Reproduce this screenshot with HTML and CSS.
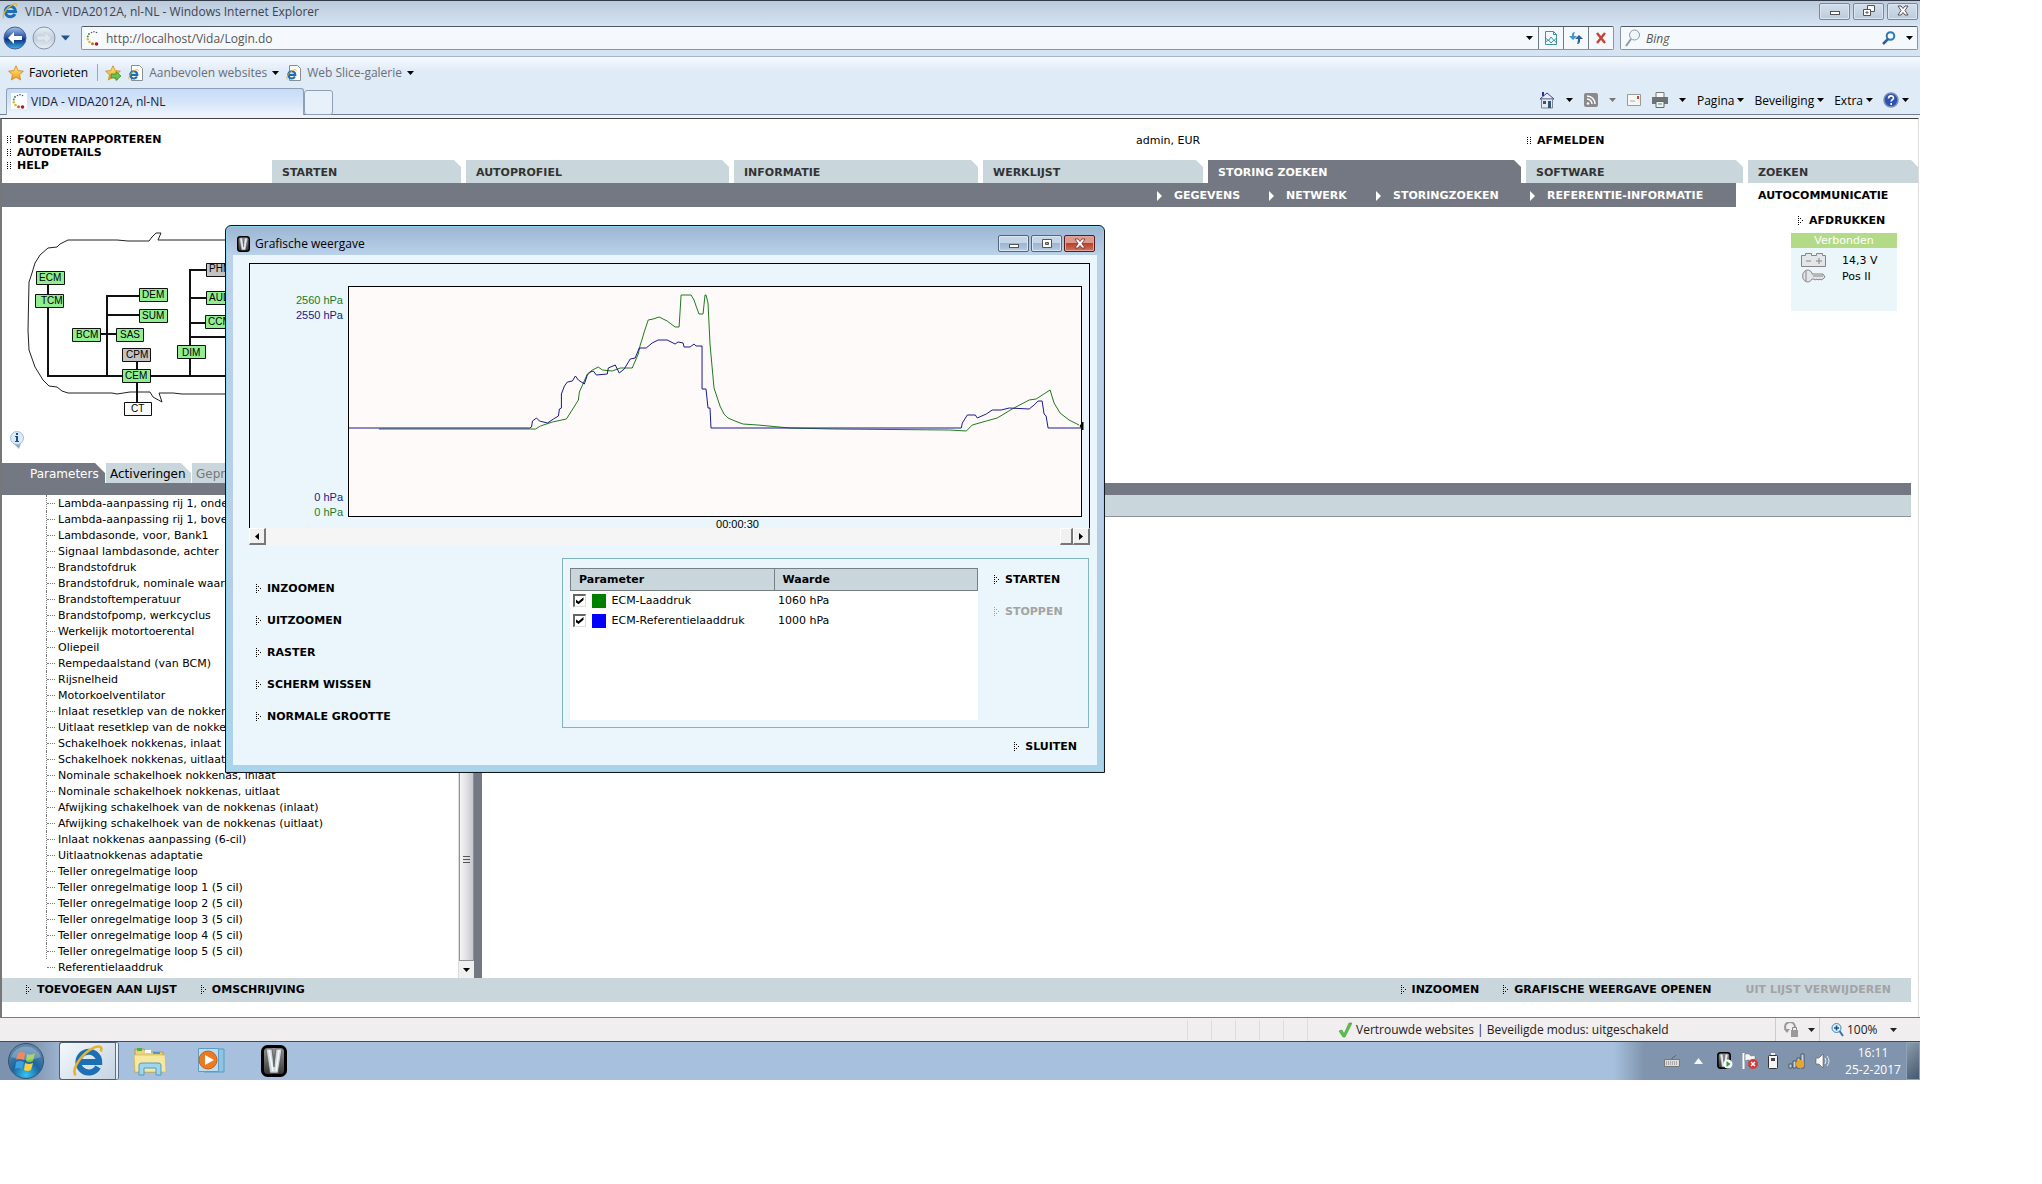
FILE: index.html
```
<!DOCTYPE html>
<html lang="nl">
<head>
  <meta charset="UTF-8" />
  <meta name="viewport" content="width=device-width, initial-scale=1.0" />
  <title>VIDA - VIDA2012A, nl-NL</title>
  <link rel="stylesheet" href="styles.css">
</head>
<body>
  <!-- Shared icons -->
  <svg class="defs" width="0" height="0">
    <defs>
      <linearGradient id="g-blue" x1="0" y1="0" x2="0" y2="1"><stop offset="0" stop-color="#a9c4ea"/><stop offset=".5" stop-color="#1d4ba0"/><stop offset=".55" stop-color="#0a2f7c"/><stop offset="1" stop-color="#3fb4f0"/></linearGradient>
      <linearGradient id="g-grey" x1="0" y1="0" x2="0" y2="1"><stop offset="0" stop-color="#e9eff6"/><stop offset=".5" stop-color="#c3d0de"/><stop offset="1" stop-color="#e8eef5"/></linearGradient>
      <linearGradient id="g-star" x1="0" y1="0" x2="0" y2="1"><stop offset="0" stop-color="#ffe98a"/><stop offset="1" stop-color="#f59c12"/></linearGradient>
      <radialGradient id="g-orb" cx=".5" cy=".9" r=".8"><stop offset="0" stop-color="#35c4f4"/><stop offset=".5" stop-color="#1b659f"/><stop offset="1" stop-color="#5f87ab"/></radialGradient>
      <linearGradient id="g-v" x1="0" y1="0" x2="0" y2="1"><stop offset="0" stop-color="#999"/><stop offset="1" stop-color="#333"/></linearGradient>
      <symbol id="caret" viewBox="0 0 7 4"><path d="M0 0h7L3.500 4z" fill="currentColor"/></symbol>
      <symbol id="dots" viewBox="0 0 4 8"><path d="M0 0h1v1H0zM3 0h1v1H3zM0 2h1v1H0zM3 2h1v1H3zM0 4h1v1H0zM3 4h1v1H3zM0 6h1v1H0zM3 6h1v1H3z" fill="currentColor"/></symbol>
      <symbol id="dotarrow" viewBox="0 0 6 9"><path d="M0 0h1v1H0zM0 2h1v1H0zM0 4h1v1H0zM0 6h1v1H0zM0 8h1v1H0zM2 2h1v1H2zM2 6h1v1H2zM4 4h1v1H4z" fill="currentColor"/></symbol>
      <symbol id="ie" viewBox="0 0 16 16">
        <path d="M13 11A5.200 5.200 0 1 1 13.600 8.500H4.500" fill="none" stroke="#1c6fb4" stroke-width="3"/>
        <path d="M1.800 15.200C-.5 12 5 4 11 1.300c3-1.300 4.300-.3 3.400 1.900" fill="none" stroke="#e8b32c" stroke-width="1.300"/>
      </symbol>
      <symbol id="vida" viewBox="0 0 16 16">
        <path d="M0 0h16v16H0z" fill="#fff"/>
        <g fill="#4a5a8a"><circle cx="6.500" cy="2.500" r=".8"/><circle cx="9" cy="1.800" r=".8"/><circle cx="11.500" cy="2.500" r=".8"/></g>
        <g fill="#3f8a50"><circle cx="4" cy="4" r="1"/><circle cx="2.800" cy="6.500" r="1"/></g>
        <g fill="#d9b636"><circle cx="2.800" cy="9.300" r="1.200"/><circle cx="4.500" cy="12" r="1.300"/></g>
        <circle cx="7.500" cy="13.700" r="1.500" fill="#cf6a2a"/><circle cx="11.500" cy="14" r="1.800" fill="#a8182a"/>
      </symbol>
      <symbol id="iepage" viewBox="0 0 16 16">
        <path d="M3.500.5h8l3 3v12h-11z" fill="#fff" stroke="#8a8f96"/>
        <use href="#ie" x="0" y="4" width="11" height="11"/>
      </symbol>
      <symbol id="star" viewBox="0 0 16 16"><path d="M8 .8l2.200 4.800 5.200.6-3.900 3.500 1.100 5.200L8 12.300l-4.600 2.600 1.100-5.200L.6 6.200l5.200-.6z" fill="url(#g-star)" stroke="#c98716" stroke-width=".8"/></symbol>
      <symbol id="volvo" viewBox="0 0 26 32">
        <rect x="1.500" y="1.500" width="23" height="29" rx="5" fill="url(#g-v)" stroke="#000" stroke-width="3"/>
        <path d="M5 4h6l2 18 2-18h6l-4 24H9z" fill="#cfd8dd" stroke="#555" stroke-width=".7"/>
        <path d="M8 5l4 21M18 5l-3 21" stroke="#f4f8fa" stroke-width="1.500"/>
      </symbol>
    </defs>
  </svg>

  <div class="desktop">
    <header class="titlebar">
      <svg class="icon16"><use href="#ie"/></svg>
      <span class="window-title">VIDA - VIDA2012A, nl-NL - Windows Internet Explorer</span>
      <div class="win-buttons">
        <button class="win-btn" aria-label="Minimaliseren"><svg width="12" height="12"><rect x="1.500" y="6.500" width="9" height="3" fill="#fff" stroke="#555"/></svg></button>
        <button class="win-btn" aria-label="Vorig formaat"><svg width="12" height="12" fill="#fff" stroke="#555"><path d="M4.500.5h7v6h-7z"/><path d="M.5 4.500h7v6h-7z"/><path d="M3 7h2v1H3z"/></svg></button>
        <button class="win-btn" aria-label="Sluiten"><svg width="12" height="12"><path d="M1 1h3l2 2.500L8 1h3L8 5.500 11 10H8L6 7.500 4 10H1l3-4.500z" fill="#fff" stroke="#555"/></svg></button>
      </div>
    </header>

    <div class="addressbar">
      <div class="history">
        <button class="round back" aria-label="Terug"><svg width="24" height="24"><circle cx="12" cy="12" r="11" fill="url(#g-blue)" stroke="#41619a"/><path d="M5 12l6-6v4h8v4h-8v4z" fill="#fff"/></svg></button>
        <button class="round" aria-label="Vooruit"><svg width="24" height="24"><circle cx="12" cy="12" r="11" fill="url(#g-grey)" stroke="#8593a5"/><path d="M19 12l-6-6v4H5v4h8v4z" fill="#dfe6ee" stroke="#c2ccd8" stroke-width=".6"/></svg></button>
        <svg class="caret caret-blue"><use href="#caret"/></svg>
      </div>
      <div class="urlbox">
        <svg class="icon16"><use href="#vida"/></svg>
        <input class="url" type="text" aria-label="Adres" value="http://localhost/Vida/Login.do">
        <svg class="caret"><use href="#caret"/></svg>
        <button class="cell" aria-label="Compatibiliteit"><svg width="14" height="16"><path d="M1.500 1.500h8l3 3v10h-11zM9.500 1.500v3h3M1.500 8l3 2.500L7 7l3 3.500 2.500-2.500M1.500 12l3-2 2.500 3 3-3 2.500 3" fill="none" stroke="#3f95a8"/></svg></button>
        <button class="cell" aria-label="Vernieuwen"><svg width="14" height="14"><path d="M6 1Q3 1 3 4v1H0l4 4 4-4H5q0-3 1-4z" fill="#3f95c8"/><path d="M8 13q3 0 3-3V8h3l-4-4-4 4h3q0 3-1 5z" fill="#2a5f9c"/></svg></button>
        <button class="cell" aria-label="Stoppen"><svg width="12" height="12"><path d="M2 1l8 10M10 1L2 11" stroke="#c84436" stroke-width="2.500"/></svg></button>
      </div>
      <div class="searchbox">
        <svg width="16" height="18"><circle cx="9.500" cy="6" r="5" fill="#eef6fb" stroke="#8d9aa8"/><path d="M6 10l-5 7" stroke="#8d9aa8" stroke-width="2"/></svg>
        <input class="search" type="text" aria-label="Zoeken" placeholder="Bing">
        <svg width="14" height="14"><circle cx="8.500" cy="5" r="3.800" fill="none" stroke="#2f78b8" stroke-width="2"/><path d="M6 8l-5 5" stroke="#2f5fa0" stroke-width="2.500"/></svg>
        <svg class="caret"><use href="#caret"/></svg>
      </div>
    </div>

    <div class="favbar">
      <button class="fav strong"><svg class="icon16"><use href="#star"/></svg>Favorieten</button>
      <button class="fav" aria-label="Toevoegen"><svg class="icon16"><use href="#star"/><path d="M6 9h5V6.500l5 4.500-5 4.500V13H6z" fill="#6cc24a" stroke="#2f8a28" stroke-width=".7"/></svg></button>
      <button class="fav"><svg class="icon16"><use href="#iepage"/></svg>Aanbevolen websites<svg class="caret"><use href="#caret"/></svg></button>
      <button class="fav"><svg class="icon16"><use href="#iepage"/></svg>Web Slice-galerie<svg class="caret"><use href="#caret"/></svg></button>
    </div>

    <div class="tabbar">
      <div class="browser-tab"><svg class="icon16"><use href="#vida"/></svg>VIDA - VIDA2012A, nl-NL</div>
      <button class="new-tab" aria-label="Nieuw tabblad"></button>
      <div class="commands">
        <button class="cmd" aria-label="Startpagina"><svg width="16" height="18"><path d="M1 8l7-6 7 6z" fill="#e6edf8" stroke="#34449c"/><path d="M2.500 8h11v9h-11z" fill="#e6ebf1" stroke="#7b8594"/><path d="M4 10h3v3H4zM9 10h3v7H9z" fill="#34547c"/><path d="M3 1h2v4H3z" fill="#3a2a9c"/></svg><svg class="caret"><use href="#caret"/></svg></button>
        <button class="cmd dim" aria-label="Feeds"><svg width="14" height="14"><rect width="14" height="14" rx="2" fill="#8a8a8a"/><circle cx="4" cy="10.500" r="1.300" fill="#fff"/><path d="M3 6a5 5 0 0 1 5 5M3 3a8 8 0 0 1 8 8" fill="none" stroke="#fff" stroke-width="1.400"/></svg><svg class="caret"><use href="#caret"/></svg></button>
        <button class="cmd" aria-label="E-mail"><svg width="14" height="12"><path d="M.5.5h13v11H.5z" fill="#f7f7f4" stroke="#9b9b98"/><path d="M10 2h2v3h-2z" fill="#c8433a"/><path d="M3 7h5" stroke="#aaa"/></svg></button>
        <button class="cmd" aria-label="Afdrukken"><svg width="16" height="16"><path d="M4 .5h8v5H4z" fill="#f5f7f9" stroke="#777"/><path d="M0 5h16v7H0z" fill="#6d7277"/><path d="M4 9.500h8v6H4z" fill="#eef2f5" stroke="#666"/><path d="M6 12h4" stroke="#4a9a5a"/></svg><svg class="caret"><use href="#caret"/></svg></button>
        <button class="cmd">Pagina<svg class="caret"><use href="#caret"/></svg></button>
        <button class="cmd">Beveiliging<svg class="caret"><use href="#caret"/></svg></button>
        <button class="cmd">Extra<svg class="caret"><use href="#caret"/></svg></button>
        <button class="cmd" aria-label="Help"><svg width="16" height="16"><circle cx="8" cy="8" r="7" fill="#2b52b0" stroke="#7d8fb4" stroke-width="1.500"/><path d="M5.500 6.500c0-3.500 5-3.300 5-.5 0 1.700-2.300 1.600-2.300 3.500M8.200 11v2" fill="none" stroke="#fff" stroke-width="1.600"/></svg><svg class="caret"><use href="#caret"/></svg></button>
      </div>
    </div>

    <main class="page">
      <div class="page-head">
        <ul class="quick">
          <li><svg class="dots"><use href="#dots"/></svg><a href="#">FOUTEN RAPPORTEREN</a></li>
          <li><svg class="dots"><use href="#dots"/></svg><a href="#">AUTODETAILS</a></li>
          <li><svg class="dots"><use href="#dots"/></svg><a href="#">HELP</a></li>
        </ul>
        <div class="head-right">
          <div class="user-row">
            <span>admin, EUR</span>
            <span><svg class="dots"><use href="#dots"/></svg><a href="#">AFMELDEN</a></span>
          </div>
          <nav class="main-tabs">
            <a href="#">STARTEN</a>
            <a href="#">AUTOPROFIEL</a>
            <a href="#">INFORMATIE</a>
            <a href="#">WERKLIJST</a>
            <a href="#" class="active">STORING ZOEKEN</a>
            <a href="#">SOFTWARE</a>
            <a href="#">ZOEKEN</a>
          </nav>
        </div>
      </div>
      <nav class="sub-nav">
        <div class="sub-items">
          <a href="#">GEGEVENS</a>
          <a href="#">NETWERK</a>
          <a href="#">STORINGZOEKEN</a>
          <a href="#">REFERENTIE-INFORMATIE</a>
        </div>
        <a href="#" class="current">AUTOCOMMUNICATIE</a>
      </nav>

      <div class="overview">
        <!-- Network of control units -->
        <svg class="network" viewBox="0 0 300 256" width="300" height="256">
          <path d="M300 33H156l3-7h-5l-4 4-3 4h-21l-11-1H66l-8 4-3 3-9 1-8 7-5 8-3 10-3 9-1 48 1 20 6 17 8 13 6 6 8 1 5 4 6 2h44l5 1 13-2h20l3 5 9 5-3-9 14 0 9 1h120" fill="none" stroke="#222"/>
          <g transform="translate(0 12)">
            <path d="M46 65v92h254M105 157V77h35M105 96h34M99 115h20M135 141v42M188 158V51h20M188 79h20M188 104h20M188 118h112" fill="none" stroke="#111" stroke-width="2"/>
            <g class="units">
              <g fill="#90ee90" stroke="#111">
                <path d="M34.500 52.500h28v13h-28zM33.500 75.500h28v13h-28zM137.500 69.500h28v13h-28zM137.500 90.500h28v13h-28zM70.500 109.500h28v13h-28zM114.500 109.500h27v13h-27zM120.500 150.500h28v13h-28zM175.500 126.500h28v13h-28zM204.500 72.500h28v13h-28zM203.500 96.500h28v13h-28z"/>
                <path d="M120.500 129.500h28v13h-28zM204.500 44.500h28v13h-28z" fill="#c3c3c3"/>
                <path d="M122.500 183.500h27v13h-27z" fill="#fff"/>
              </g>
              <text x="37" y="62">ECM</text><text x="39" y="85">TCM</text><text x="140" y="79">DEM</text><text x="140" y="100">SUM</text>
              <text x="74" y="119">BCM</text><text x="118" y="119">SAS</text><text x="124" y="139">CPM</text><text x="123" y="160">CEM</text>
              <text x="180" y="137">DIM</text><text x="207" y="53">PHM</text><text x="207" y="82">AUD</text><text x="206" y="106">CCM</text><text x="129" y="193">CT</text>
            </g>
          </g>
          <path d="M11 236h8l-2 6z" fill="#8fabc8"/>
          <circle cx="15" cy="231" r="6.500" fill="#dcebf8" stroke="#a6bdd4"/>
          <path d="M14 226h2v2h-2zM13 229h3v5h1v1h-4v-1h1v-4h-1z" fill="#1f4a94"/>
        </svg>
        <aside class="car-status">
          <a class="action" href="#"><svg class="arrow"><use href="#dotarrow"/></svg>AFDRUKKEN</a>
          <div class="link-state">Verbonden</div>
          <dl>
            <dt><svg width="26" height="16"><path d="M.5 3.500h4v-2h6v2h5v-2h6v2h3v11H.5z" fill="#e3e6e8" stroke="#858585"/><path d="M5 9h5M15 9h6M18 6v6" stroke="#858585"/></svg></dt><dd>14,3 V</dd>
            <dt><svg width="26" height="16"><path d="M11 5a5 6 0 1 0 0 6h2l1 1 2-1 1 1 2-1 1 1 2-1 2-2-2-3H11z" fill="#e3e6e8" stroke="#858585"/><path d="M5 3v10M12 8h10" stroke="#858585"/></svg></dt><dd>Pos II</dd>
          </dl>
        </aside>
      </div>

      <section class="workspace">
        <nav class="pane-tabs">
          <a href="#" class="active">Parameters</a>
          <a href="#">Activeringen</a>
          <a href="#" class="off">Geprogrammeerd</a>
        </nav>
        <div class="panes">
          <div class="tree-pane">
            <ul class="tree">
              <li>Lambda-aanpassing rij 1, onder</li>
              <li>Lambda-aanpassing rij 1, boven</li>
              <li>Lambdasonde, voor, Bank1</li>
              <li>Signaal lambdasonde, achter</li>
              <li>Brandstofdruk</li>
              <li>Brandstofdruk, nominale waarde</li>
              <li>Brandstoftemperatuur</li>
              <li>Brandstofpomp, werkcyclus</li>
              <li>Werkelijk motortoerental</li>
              <li>Oliepeil</li>
              <li>Rempedaalstand (van BCM)</li>
              <li>Rijsnelheid</li>
              <li>Motorkoelventilator</li>
              <li>Inlaat resetklep van de nokkenas</li>
              <li>Uitlaat resetklep van de nokkenas</li>
              <li>Schakelhoek nokkenas, inlaat</li>
              <li>Schakelhoek nokkenas, uitlaat</li>
              <li>Nominale schakelhoek nokkenas, inlaat</li>
              <li>Nominale schakelhoek nokkenas, uitlaat</li>
              <li>Afwijking schakelhoek van de nokkenas (inlaat)</li>
              <li>Afwijking schakelhoek van de nokkenas (uitlaat)</li>
              <li>Inlaat nokkenas aanpassing (6-cil)</li>
              <li>Uitlaatnokkenas adaptatie</li>
              <li>Teller onregelmatige loop</li>
              <li>Teller onregelmatige loop 1 (5 cil)</li>
              <li>Teller onregelmatige loop 2 (5 cil)</li>
              <li>Teller onregelmatige loop 3 (5 cil)</li>
              <li>Teller onregelmatige loop 4 (5 cil)</li>
              <li>Teller onregelmatige loop 5 (5 cil)</li>
              <li>Referentielaaddruk</li>
            </ul>
            <div class="vscroll">
              <div class="vthumb"><i></i></div>
              <svg class="caret"><use href="#caret"/></svg>
            </div>
          </div>
          <div class="value-pane"><div class="value-head"></div></div>
        </div>
        <footer class="actions">
          <a class="action" href="#"><svg class="arrow"><use href="#dotarrow"/></svg>TOEVOEGEN AAN LIJST</a>
          <a class="action" href="#"><svg class="arrow"><use href="#dotarrow"/></svg>OMSCHRIJVING</a>
          <span class="spacer"></span>
          <a class="action" href="#"><svg class="arrow"><use href="#dotarrow"/></svg>INZOOMEN</a>
          <a class="action" href="#"><svg class="arrow"><use href="#dotarrow"/></svg>GRAFISCHE WEERGAVE OPENEN</a>
          <a class="action off" href="#">UIT LIJST VERWIJDEREN</a>
        </footer>
      </section>
    </main>

    <div class="statusbar">
      <div class="slots"><i></i><i></i><i></i><i></i><i></i></div>
      <div class="zone"><svg width="14" height="16"><path d="M1 9l3-1 2 4 5-11h3L7 15H5z" fill="#5cc04a" stroke="#3f9a34" stroke-width=".6"/></svg>Vertrouwde websites | Beveiligde modus: uitgeschakeld</div>
      <div class="privacy"><svg width="16" height="16"><path d="M3 9a5 5 0 1 1 8-4" fill="none" stroke="#9a9a9a" stroke-width="2"/><path d="M7 8h7v7H7z" fill="#9a9a9a"/><path d="M8.500 8V5.500h4V8" fill="none" stroke="#888"/><path d="M0 7h6l-3 4z" fill="#9a9a9a"/></svg><svg class="caret"><use href="#caret"/></svg></div>
      <div class="zoom"><svg width="14" height="16"><circle cx="5.500" cy="6" r="4.500" fill="#dff0fa" stroke="#3f87b8"/><path d="M3 6h5M5.500 3.500v5" stroke="#1c4f90" stroke-width="1.600"/><path d="M8.500 9l3.500 5" stroke="#3a6fa8" stroke-width="2"/></svg>100%<svg class="caret"><use href="#caret"/></svg></div>
    </div>

    <div class="taskbar">
      <button class="start" aria-label="Start"><svg width="38" height="38"><circle cx="19" cy="19" r="17.500" fill="url(#g-orb)" stroke="#35536f"/><path d="M11 11q4-2 7 0l-1 7q-4-2-8 0z" fill="#e8622c"/><path d="M20 12q4 2 8-1l-2 8q-4 2-7 0z" fill="#8cc63e"/><path d="M9 20q4-2 8 0l-2 7q-4-2-7 0z" fill="#3fa0e0"/><path d="M18 21q4 2 8 0l-2 7q-4 2-7 0z" fill="#f9cf3c"/><path d="M4 15a16 16 0 0 1 30 0q-15 6-30 0z" fill="#fff" opacity=".25"/></svg></button>
      <button class="task open" aria-label="Internet Explorer"><svg width="32" height="32"><use href="#ie"/></svg></button>
      <button class="task" aria-label="Verkenner"><svg width="34" height="30"><path d="M2 3h9l2 3h17v20H2z" fill="#ecd27a" stroke="#b89a48"/><path d="M4 2h5v3H4z" fill="#4fae4a"/><path d="M12 4h6v3h-6z" fill="#fff"/><path d="M20 6h7v2h-7z" fill="#4f9ad0"/><path d="M1 9h31l1 17H2z" fill="#f7e8a0" stroke="#cdb565" stroke-width=".7"/><path d="M6 29V19q0-2 3-2h16q3 0 3 2v10h-5v-7H11v7z" fill="#9fd6ee" stroke="#4f9cc4"/></svg></button>
      <button class="task" aria-label="Mediaspeler"><svg width="30" height="28"><path d="M7 2h20v23H7z" fill="#8fc4e4" stroke="#5b9cc4"/><path d="M1.500 1.500h20v23h-20z" fill="#bcdcf0" stroke="#5b9cc4"/><circle cx="11" cy="13" r="9" fill="#ec7a22" stroke="#c4621a"/><path d="M8 8l9 5-9 5z" fill="#fff"/></svg></button>
      <button class="task" aria-label="VIDA"><svg width="26" height="32"><use href="#volvo"/></svg></button>
      <div class="tray">
        <svg width="16" height="14"><path d="M.5 5.500h15v7H.5z" fill="#ddd" stroke="#777"/><path d="M2 8h12M2 10h12" stroke="#777" stroke-dasharray="1 1"/><path d="M8 5c0-3 3-1 4-4" fill="none" stroke="#666"/></svg>
        <svg class="more" width="9" height="6"><path d="M0 6l4.500-6L9 6z" fill="#f2f5f8"/></svg>
        <svg width="16" height="18"><use href="#volvo" width="14" height="17"/><circle cx="11" cy="12" r="4.500" fill="#fff"/><path d="M9.500 9l4 3-4 3z" fill="#2f9a3a"/></svg>
        <svg width="16" height="18"><path d="M1.500 1v16" stroke="#fff" stroke-width="2"/><path d="M3 2q4-1 5 1t5 0v7q-4 1-5-1T3 9z" fill="#f4f4f4" stroke="#666" stroke-width=".5"/><circle cx="11" cy="12" r="5" fill="#d63a34"/><path d="M9 10l4 4m0-4l-4 4" stroke="#fff" stroke-width="1.500"/></svg>
        <svg width="12" height="18"><rect x="1.500" y="3.500" width="9" height="13" rx="1" fill="#f4f4f4" stroke="#333"/><path d="M4 1h4v2H4z" fill="#eee"/><path d="M4 6h4v3H4z" fill="#444"/></svg>
        <svg width="18" height="16"><path d="M1 11h3v4H1zM5 8h3v7H5zM9 5h3v10H9zM13 1h3v14h-3z" fill="#c8d2da" stroke="#3a4553" stroke-width=".8"/><circle cx="12" cy="11" r="4" fill="#eaa62a"/></svg>
        <svg width="16" height="16"><path d="M1 5h3l4-4v14l-4-4H1z" fill="#fff" stroke="#555" stroke-width=".6"/><path d="M10 5q2 3 0 6M12 3q4 5 0 10" fill="none" stroke="#e8edf2"/></svg>
        <div class="clock"><span>16:11</span><span>25-2-2017</span></div>
      </div>
      <button class="peek" aria-label="Bureaublad weergeven"></button>
    </div>

    <!-- Graph window -->
    <div class="dialog" role="dialog" aria-labelledby="dlg-title">
      <div class="dialog-title">
        <svg width="13" height="16"><use href="#volvo"/></svg>
        <span id="dlg-title">Grafische weergave</span>
        <div class="win-buttons">
          <button class="win-btn" aria-label="Minimaliseren"><svg width="12" height="12"><rect x="1.500" y="6.500" width="9" height="3" fill="#fff" stroke="#555"/></svg></button>
          <button class="win-btn" aria-label="Maximaliseren"><svg width="12" height="10"><path d="M1.500.5h9v8h-9z" fill="#fff" stroke="#555"/><path d="M4.500 3.500h3v2h-3z" fill="#9ab" stroke="#555"/></svg></button>
          <button class="win-btn close" aria-label="Sluiten"><svg width="12" height="11"><path d="M1 1h3l2 2.500L8 1h3L8 5.500 11 10H8L6 7.500 4 10H1l3-4.500z" fill="#fff" stroke="#6a3030" stroke-width=".8"/></svg></button>
        </div>
      </div>
      <div class="dialog-body">
        <div class="graph">
          <div class="axis">
            <div><span class="green">2560 hPa</span><span class="blue">2550 hPa</span></div>
            <div><span class="blue">0 hPa</span><span class="green">0 hPa</span></div>
          </div>
          <div class="plot">
            <svg viewBox="0 0 734 229" preserveAspectRatio="none" fill="none" stroke-width="1">
              <polyline stroke="#1e7a1e" points="30,142 187,142 192,139 204,135 218,132 225,121 230,113 231,105 235,96 239,87 244,83 250,80 254,83 264,84 272,81 284,81 287,74 290,67 292,58 294,52 296,45 298,39 300,33 305,32 311,30 319,34 327,40 331,40 333,8 343,8 346,13 348,19 351,27 355,27 357,8 358,8 360,16 362,57 364,79 366,101 368,107 372,119 376,127 380,131 387,134 395,137 410,138 442,141 485,142 602,143 619,144 625,138 639,134 650,131 665,122 682,113 689,112 703,103 707,116 713,126 722,133 732,138"/>
              <polyline stroke="#1a1a8c" points="0,141 181,141 183,140 184,134 188,131 191,134 199,136 205,132 210,129 211,122 213,121 213,107 216,99 219,95 224,94 227,89 230,93 236,97 239,88 242,85 245,84 248,88 259,87 260,81 267,78 271,86 276,82 282,72 287,71 291,61 298,61 304,56 310,53 319,53 327,57 330,55 335,56 336,60 342,60 346,57 348,59 354,59 354,102 358,102 360,121 362,121 363,141 614,141 615,136 620,128 628,128 630,131 639,127 645,123 654,123 662,121 682,122 687,118 691,114 695,114 697,127 699,129 701,141 734,141"/>
              <path d="M736 135l-3 4 3 4z" fill="#000" stroke="#000"/>
            </svg>
          </div>
          <div class="time">00:00:30</div>
        </div>
        <div class="hscroll">
          <button class="hbtn" aria-label="Links"><svg width="4" height="7"><path d="M4 0v7L0 3.500z"/></svg></button>
          <span class="hthumb"></span>
          <button class="hbtn" aria-label="Rechts"><svg width="4" height="7"><path d="M0 0v7l4-3.500z"/></svg></button>
        </div>
        <div class="controls">
          <div class="graph-actions">
            <button class="action"><svg class="arrow"><use href="#dotarrow"/></svg>INZOOMEN</button>
            <button class="action"><svg class="arrow"><use href="#dotarrow"/></svg>UITZOOMEN</button>
            <button class="action"><svg class="arrow"><use href="#dotarrow"/></svg>RASTER</button>
            <button class="action"><svg class="arrow"><use href="#dotarrow"/></svg>SCHERM WISSEN</button>
            <button class="action"><svg class="arrow"><use href="#dotarrow"/></svg>NORMALE GROOTTE</button>
          </div>
          <div class="legend">
            <div class="legend-list">
              <table>
                <thead><tr><th>Parameter</th><th>Waarde</th></tr></thead>
                <tbody>
                  <tr><td><label><input type="checkbox" checked><i class="swatch s-green"></i>ECM-Laaddruk</label></td><td>1060 hPa</td></tr>
                  <tr><td><label><input type="checkbox" checked><i class="swatch s-blue"></i>ECM-Referentielaaddruk</label></td><td>1000 hPa</td></tr>
                </tbody>
              </table>
            </div>
            <div class="legend-actions">
              <button class="action"><svg class="arrow"><use href="#dotarrow"/></svg>STARTEN</button>
              <button class="action off" disabled><svg class="arrow"><use href="#dotarrow"/></svg>STOPPEN</button>
            </div>
          </div>
        </div>
        <div class="dialog-foot">
          <button class="action"><svg class="arrow"><use href="#dotarrow"/></svg>SLUITEN</button>
        </div>
      </div>
    </div>
  </div>
</body>
</html>
```
FILE: styles.css
```
* { box-sizing: border-box; }
body { margin: 0; padding: 0 122px 104px 0; background: #fff; color: #000; font-family: "DejaVu Sans", Verdana, sans-serif; font-size: 11px; }
a { color: inherit; text-decoration: none; }
ul { list-style: none; margin: 0; padding: 0; }
button { background: none; border: 0; padding: 0; font: inherit; color: inherit; cursor: pointer; }
input { font: inherit; }
svg { flex: none; }
.defs { position: absolute; }
.icon16 { width: 16px; height: 16px; }
.caret { width: 7px; height: 4px; }
.dots { width: 4px; height: 8px; }
.arrow { width: 6px; height: 9px; shape-rendering: crispEdges; }

.desktop { position: relative; display: flex; flex-direction: column; height: calc(100vh - 104px); min-height: 1000px; }
.titlebar, .addressbar, .favbar, .tabbar, .statusbar, .taskbar { font-family: "Open Sans", "Segoe UI", sans-serif; font-size: 12px; display: flex; align-items: center; flex: none; }

/* Browser chrome */
.titlebar { height: 24px; padding: 0 2px 3px; gap: 7px; border-top: 1px solid #333a48; background: linear-gradient(#bccbdc, #d3e0ef); color: #3c4450; }
.win-buttons { margin-left: auto; display: flex; gap: 3px; }
.win-btn { width: 28px; height: 17px; display: flex; align-items: center; justify-content: center; border: 1px solid #78879c; border-radius: 2px; background: linear-gradient(#d2deec, #bccbdd); box-shadow: inset 0 0 0 1px #dce6f1; }
.titlebar .win-btn { width: 31px; }
.addressbar { height: 33px; padding: 0 2px 4px 3px; gap: 6px; background: #d6e3f2; border-bottom: 1px solid #a6b5c6; }
.history { display: flex; align-items: center; gap: 5px; width: 72px; }
.round { height: 24px; }
.history .caret { width: 9px; height: 6px; }
.caret-blue { color: #20538c; }
.urlbox, .searchbox { display: flex; align-items: center; height: 24px; background: #f5f9fd; border: 1px solid #8995a5; border-top-color: #4e5966; border-radius: 2px; }
.urlbox { flex: 1; padding-left: 3px; }
.url, .search { flex: 1; min-width: 0; border: 0; background: none; padding: 0 5px; color: #555; }
.urlbox .caret { margin-right: 5px; }
.cell { width: 25px; height: 22px; border-left: 1px solid #6f7a88; display: flex; align-items: center; justify-content: center; }
.searchbox { width: 298px; padding: 0 4px; }
.search::placeholder { font-style: italic; color: #555; opacity: 1; }
.searchbox .caret { margin-left: 10px; }
.favbar { height: 31px; padding: 0 8px; gap: 7px; background: linear-gradient(#f6faff, #e0ebf8 45%); color: #6a6f76; }
.fav { display: flex; align-items: center; gap: 5px; }
.fav .caret { color: #000; }
.fav.strong { color: #000; padding-right: 9px; border-right: 1px solid #9aa8b8; }
.tabbar { height: 30px; align-items: stretch; padding: 0 6px; background: linear-gradient(#e0ebf8 26px, #6f7e90 26px, #6f7e90 27px, #eef3f9 27px); }
.browser-tab { width: 298px; height: 27px; display: flex; align-items: center; gap: 4px; padding: 0 4px 2px; border: 1px solid #8fa0b4; border-bottom: 0; border-radius: 3px 3px 0 0; background: linear-gradient(#c8dcf8, #d4e4f9 50%, #eef4fd); color: #14223a; }
.new-tab { width: 29px; height: 25px; margin-top: 2px; border: 1px solid #8fa0b4; border-radius: 3px; background: #e8f0fa; }
.commands { margin-left: auto; height: 24px; display: flex; align-items: center; gap: 10px; padding-right: 5px; }
.cmd { display: flex; align-items: center; gap: 3px; }
.cmd:nth-child(-n+4) { gap: 11px; margin-right: 1px; }
.cmd.dim .caret { color: #777; }

/* VIDA page */
.page { flex: 1; min-height: 0; display: flex; flex-direction: column; border-top: 1px solid #444; border-left: 2px solid #777; border-right: 1px solid #ddd; margin-right: 1px; background: #fff; }
.page-head { display: flex; height: 64px; flex: none; }
.quick { width: 270px; padding: 14px 5px; font-weight: bold; line-height: 13px; }
.quick li { display: flex; align-items: center; gap: 6px; }
.head-right { flex: 1; display: flex; flex-direction: column; justify-content: space-between; }
.user-row { display: flex; justify-content: flex-end; padding-top: 15px; line-height: 14px; }
.user-row span { width: 391px; display: flex; align-items: center; gap: 6px; }
.user-row a { font-weight: bold; }
.main-tabs { display: grid; grid-template-columns: 189fr 263fr 244fr 220fr 313fr 217fr 170fr; gap: 5px; font-weight: bold; color: #333; }
.main-tabs a { height: 23px; line-height: 25px; padding-left: 10px; background: #c9d6dc; clip-path: polygon(0 0, calc(100% - 7px) 0, 100% 7px, 100% 100%, 0 100%); }
.main-tabs .active { background: #737882; color: #fff; }
.sub-nav { display: flex; height: 24px; flex: none; font-weight: bold; line-height: 25px; }
.sub-items { flex: 1; display: grid; grid-template-columns: 112px 107px 154px 206px; justify-content: end; background: #737882; color: #fff; }
.sub-items a { display: flex; align-items: center; gap: 12px; }
.sub-items a::before { content: ""; border: 5px solid transparent; border-left-color: #fff; border-right: 0; }
.current { width: 182px; padding-left: 22px; }
.overview { display: flex; justify-content: space-between; height: 256px; flex: none; padding-right: 21px; overflow: hidden; }
.units text { font-family: "Liberation Sans", Arial, sans-serif; font-size: 10px; }
.car-status { width: 106px; }
.action { display: flex; align-items: center; gap: 5px; font-weight: bold; white-space: nowrap; }
.action.off { color: #a3a3a3; }
.car-status .action { height: 26px; padding-left: 7px; }
.link-state { height: 15px; line-height: 15px; text-align: center; background: #b3da86; color: #fff; }
.car-status dl { margin: 0; height: 63px; padding: 4px 10px; background: #eaf6fa; display: grid; grid-template-columns: 26px 1fr; grid-auto-rows: 16px; column-gap: 15px; line-height: 17px; }
.car-status dt, .car-status dd { margin: 0; }

.workspace { flex: 1; min-height: 0; display: flex; flex-direction: column; padding: 0 7px 15px 0; }
.pane-tabs { display: flex; flex: none; height: 20px; line-height: 22px; gap: 1px; font-size: 12px; }
.pane-tabs a { padding: 0 4px; width: 85px; background: #c9d6dc; clip-path: polygon(0 0, calc(100% - 10px) 0, 100% 10px, 100% 100%, 0 100%); }
.pane-tabs .active { width: 103px; padding-left: 28px; background: #737882; color: #fff; }
.pane-tabs .off { width: 120px; color: #777; }
.panes { flex: 1; min-height: 0; display: flex; border-top: 12px solid #737882; }
.tree-pane { width: 480px; display: flex; justify-content: space-between; border-right: 8px solid #737882; overflow: hidden; }
.tree { margin-left: 44px; }
.tree li { position: relative; height: 16px; line-height: 17px; padding-left: 11px; white-space: nowrap; border-left: 1px dotted #777; }
.tree li::before { content: ""; position: absolute; left: 0; top: 8px; width: 8px; border-top: 1px dotted #777; }
.tree li:last-child { border-left-color: transparent; }
.vscroll { width: 16px; display: flex; flex-direction: column; align-items: center; background: #f0f0f0; border-left: 1px solid #ddd; }
.vthumb { flex: 1; width: 15px; margin-bottom: 7px; border: 1px solid #8f9399; background: linear-gradient(90deg, #f4f4f4, #e4e4e8 45%, #c5c6cc); }
.vthumb i { display: block; width: 7px; height: 8px; margin: 360px 3px 0; background: repeating-linear-gradient(#555 0 1px, transparent 1px 3px); }
.vscroll .caret { margin-bottom: 6px; }
.value-pane { flex: 1; }
.value-head { height: 22px; background: #c9d6dc; border-bottom: 1px solid #8b9297; }
.actions { display: flex; align-items: center; flex: none; height: 24px; gap: 24px; padding: 0 20px 2px 24px; background: #c9d6dc; }
.actions .off { padding-left: 10px; }
.spacer { flex: 1; }

/* Status bar and task bar */
.statusbar { height: 24px; border-top: 1px solid #777d86; background: #f0eeee; color: #222; align-items: stretch; }
.statusbar > div { display: flex; align-items: center; }
.slots { margin-left: auto; }
.slots i { width: 24px; height: 20px; border-left: 1px solid #ddd; }
.zone { width: 468px; padding-left: 30px; gap: 4px; border-left: 1px solid #ddd; }
.privacy { width: 44px; padding-left: 8px; gap: 8px; border-left: 1px solid #ccc; }
.zoom { width: 101px; padding-left: 11px; gap: 2px; border-left: 1px solid #ccc; }
.zoom .caret { margin-left: 10px; }
.taskbar { height: 39px; border-top: 1px solid #3f4c60; background: linear-gradient(90deg, #7d92ae 30px, #a6c0dd 70px); }
.start { margin-left: 7px; width: 52px; height: 38px; }
.start svg { display: block; }
.task { width: 62px; height: 38px; display: flex; align-items: center; justify-content: center; }
.task.open { width: 60px; border: 1px solid #4d5f78; border-right: 4px double #5c6f88; border-radius: 3px; background: linear-gradient(135deg, #f4f8fb, #c5d3e2); }
.tray { margin-left: auto; align-self: stretch; display: flex; align-items: center; gap: 9px; padding-left: 50px; background: linear-gradient(90deg, transparent, #8094ad 30px); color: #fff; }
.tray .more { margin: 0 5px; }
.clock { width: 66px; display: flex; flex-direction: column; text-align: center; line-height: 17px; }
.peek { width: 14px; height: 38px; border: 1px solid #8fa3b8; background: linear-gradient(135deg, #8d9cae, #45586f); }

/* Graph window */
.dialog { position: absolute; left: 225px; top: 225px; width: 880px; border: 1px solid #101820; border-radius: 6px 6px 0 0; padding: 0 7px 7px; background: linear-gradient(#9cb5d2, #bbd2ea 30px, #b5cfe6 60%, #a9d4ea); box-shadow: inset 0 0 0 1px #8fd4ec; }
.dialog-title { height: 29px; display: flex; align-items: center; gap: 5px; padding: 6px 2px 0 4px; font-family: "Open Sans", "Segoe UI", sans-serif; font-size: 12px; }
.dialog .win-btn { width: 31px; background: linear-gradient(#c6d6e8 45%, #9cb6d2 50%, #b5cbe2); border-color: #53657d; }
.dialog .win-buttons { gap: 2px; }
.dialog .win-btn.close { background: linear-gradient(#dd9a8c 45%, #b8412c 50%, #d0735c); border-color: #541c1c; box-shadow: inset 0 0 0 1px #e0a79c; }
.dialog-body { background: #eaf6fb; padding: 8px 7px 0 16px; }
.graph { height: 265px; display: grid; grid-template: 231px 1fr / 98px 1fr; padding: 22px 7px 0 0; border: 1px solid #000; border-bottom: 0; font-family: "Liberation Sans", Arial, sans-serif; line-height: 15px; }
.axis { display: flex; flex-direction: column; justify-content: space-between; margin-bottom: -3px; padding: 7px 5px 0 0; text-align: right; }
.axis div { display: flex; flex-direction: column; }
.green { color: #1e7a1e; }
.blue { color: #1a1a8c; }
.plot { border: 1px solid #000; background: #fefaf9; }
.plot svg { display: block; width: 100%; height: 100%; overflow: visible; shape-rendering: crispEdges; }
.time { grid-column: 2; text-align: center; line-height: 12px; padding-top: 1px; margin-left: 45px; }
.hscroll { display: flex; height: 17px; background: #f5f5f5; }
.hbtn, .hthumb { width: 17px; height: 17px; display: flex; align-items: center; justify-content: center; background: #f0f0f0; border: 1px solid #fff; border-right: 2px solid #777; border-bottom: 2px solid #777; }
.hthumb { width: 13px; margin-left: auto; }
.controls { display: flex; justify-content: space-between; margin-top: 13px; padding-right: 1px; }
.graph-actions { display: flex; flex-direction: column; gap: 18px; padding: 23px 0 0 7px; }
.graph-actions .action, .legend-actions .action, .dialog-foot .action { height: 14px; }
.legend { width: 527px; height: 170px; display: flex; gap: 16px; padding: 9px 7px 7px; border: 1px solid #7fb4c0; }
.legend-list { width: 408px; background: #fff; }
.legend table { width: 100%; border-collapse: collapse; table-layout: fixed; }
.legend th { height: 22px; padding: 0 8px; text-align: left; border: 1px solid #777f85; background: #c9d6dc; }
.legend td { height: 20px; padding: 0 4px; }
.legend td:first-child { padding: 0 2px; }
.legend label { display: flex; align-items: center; gap: 6px; }
.legend input { appearance: none; position: relative; width: 13px; height: 13px; margin: 0; background: #fff; border: 2px solid #666; border-right: 1px solid #ddd; border-bottom: 1px solid #ddd; }
.legend input:checked::after { content: ""; position: absolute; left: 1px; top: 1px; width: 8px; height: 7px; background: #000; clip-path: polygon(0 30%, 38% 60%, 100% 0, 100% 40%, 38% 100%, 0 70%); }
.swatch { width: 14px; height: 14px; }
.s-green { background: #008000; }
.s-blue { background: #0000ff; }
.legend-actions { display: flex; flex-direction: column; gap: 18px; padding-top: 4px; }
.dialog-foot { display: flex; justify-content: flex-end; padding: 11px 13px 12px 0; }
```
